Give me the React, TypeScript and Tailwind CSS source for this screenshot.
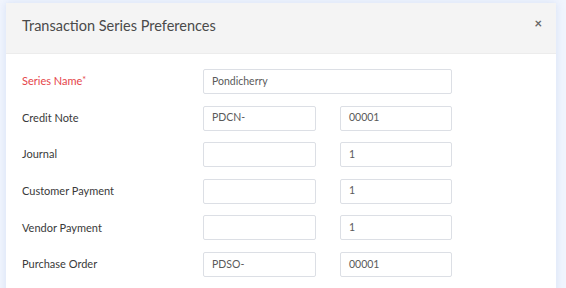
const rows = [
  { label: 'Series Name', required: true, single: 'Pondicherry' },
  { label: 'Credit Note', prefix: 'PDCN-', next: '00001' },
  { label: 'Journal', prefix: '', next: '1' },
  { label: 'Customer Payment', prefix: '', next: '1' },
  { label: 'Vendor Payment', prefix: '', next: '1' },
  { label: 'Purchase Order', prefix: 'PDSO-', next: '00001' },
  // only the top edge of this row is in view
  { label: '', prefix: '', next: '' },
]

function Field({ value, className }: { value?: string; className: string }) {
  return (
    <div
      className={`h-[25px] border border-[#dcdfe5] rounded-[2px] bg-white pl-[8px] flex items-center text-[10.5px] text-[#5a5a5a] ${className}`}
    >
      {value}
    </div>
  )
}

export default function App() {
  return (
    <div
      className="w-[566px] h-[288px] overflow-hidden bg-[#f1f5fd] pt-[3px] pl-[6px]"
      style={{ fontFamily: 'Lato, "Open Sans", sans-serif' }}
    >
      <div className="w-[550px] h-[300px] bg-white shadow-[0_0_8px_rgba(180,200,240,0.45)]">
        <div className="h-[51px] bg-[#f4f4f4] border-b border-[#ececec] flex items-start justify-between pl-[16px] pr-[14px]">
          <h2 className="mt-[12px] text-[14.5px] leading-[22px] text-[#4a4a4a]">Transaction Series Preferences</h2>
          <span className="mt-[14px] text-[13px] leading-none text-[#666] font-bold">×</span>
        </div>
        <div className="pt-[15px] pl-[16px] flex flex-col gap-[11.6px]">
          {rows.map((row, i) => (
            <div key={i} className="flex items-center h-[25px]">
              <div
                className={`w-[181px] text-[11px] ${row.required ? 'text-[#e5454a]' : 'text-[#3a3a3a]'}`}
              >
                {row.label}
                {row.required && <span className="text-[9px] align-top">*</span>}
              </div>
              {row.single !== undefined ? (
                <Field value={row.single} className="w-[249px]" />
              ) : (
                <div className="flex gap-[24px]">
                  <Field value={row.prefix} className="w-[113px]" />
                  <Field value={row.next} className="w-[112px]" />
                </div>
              )}
            </div>
          ))}
        </div>
      </div>
    </div>
  )
}
